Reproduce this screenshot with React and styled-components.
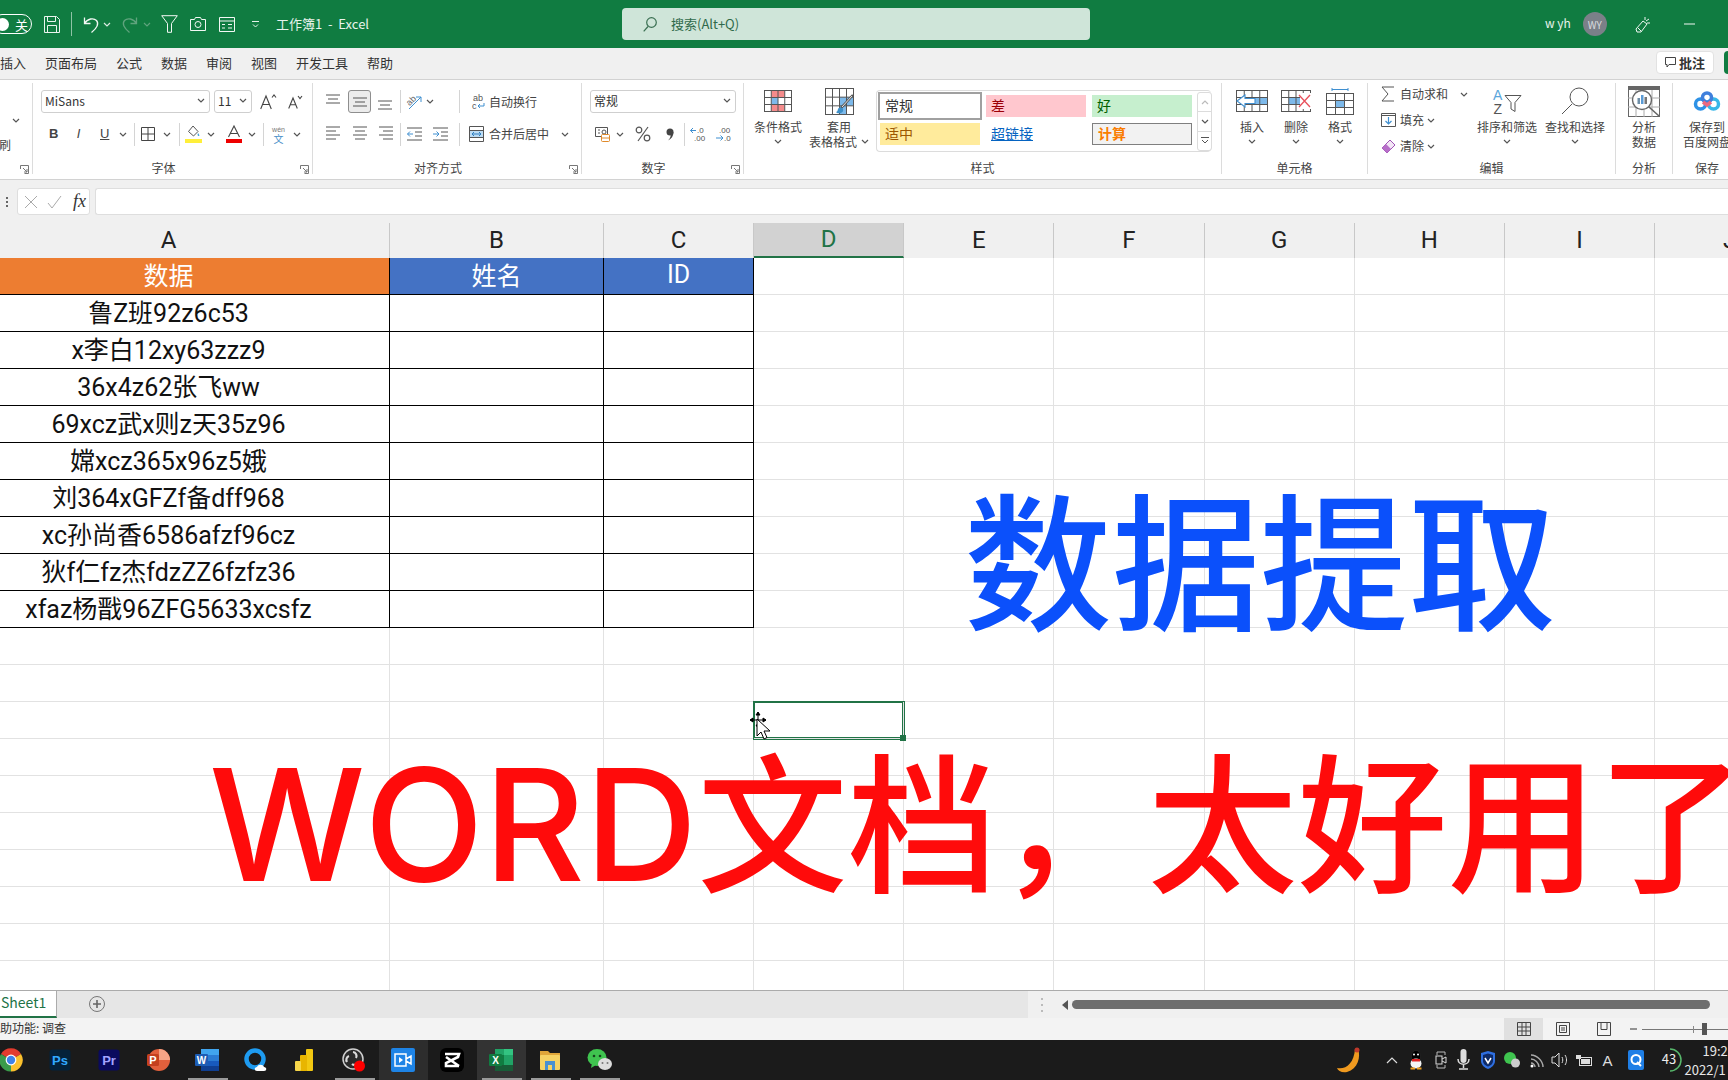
import styled, { createGlobalStyle } from "styled-components";

const UI_FONT = '"Noto Sans CJK SC", "Noto Sans", sans-serif';
const CELL_FONT = 'Roboto, "Noto Sans CJK SC", sans-serif';

const GlobalStyle = createGlobalStyle`
  html, body { margin: 0; padding: 0; width: 1728px; height: 1080px; overflow: hidden; background: #fff; }
  * { box-sizing: border-box; }
`;

const Page = styled.div`
  width: 1728px;
  height: 1080px;
  display: flex;
  flex-direction: column;
  overflow: hidden;
  font-family: ${UI_FONT};
  color: #444;
`;

// shared little parts, $ml is the distance from the previous item
const Ico = styled.svg`
  flex: none;
  display: block;
  overflow: visible;
  margin-left: ${(p) => p.$ml || 0}px;
  margin-top: ${(p) => p.$mt || 0}px;
`;

const Txt = styled.span`
  flex: none;
  margin-left: ${(p) => p.$ml || 0}px;
  margin-top: ${(p) => p.$mt || 0}px;
  font-size: ${(p) => p.$size || 12}px;
  line-height: 1;
  white-space: nowrap;
  color: ${(p) => p.$color || "#444"};
`;

const VLine = styled.div`
  flex: none;
  width: 1px;
  height: ${(p) => p.$h || 23}px;
  margin-left: ${(p) => p.$ml || 0}px;
  background: ${(p) => p.$color || "#d4d4d4"};
`;

function Chev({ ml, color = "#555", mt }) {
  return (
    <Ico $ml={ml} $mt={mt} width="8" height="5" viewBox="0 0 8 5">
      <path d="M1 1l3 3 3-3" fill="none" stroke={color} strokeWidth="1.2" />
    </Ico>
  );
}

// title bar
const TitleBar = styled.header`
  height: 48px;
  flex: none;
  display: flex;
  align-items: center;
  background: #107c41;
`;

const QuickAccess = styled.div`
  width: 622px;
  flex: none;
  display: flex;
  align-items: center;
`;

const Toggle = styled.div`
  flex: none;
  width: 40px;
  height: 20px;
  margin-left: -8px;
  padding-left: 3px;
  display: flex;
  align-items: center;
  gap: 6px;
  border: 1px solid #fff;
  border-radius: 10px;
  color: #fff;
  font-size: 13px;
`;

const ToggleKnob = styled.div`
  width: 13px;
  height: 13px;
  border-radius: 50%;
  background: #fff;
  flex: none;
`;

const SearchBox = styled.div`
  width: 468px;
  height: 32px;
  flex: none;
  display: flex;
  align-items: center;
  border-radius: 4px;
  background: #cfe5d9;
`;

const Avatar = styled.div`
  width: 24px;
  height: 24px;
  margin-left: 12px;
  border-radius: 50%;
  flex: none;
  display: flex;
  align-items: center;
  justify-content: center;
  background: #7b8088;
  color: #d8dade;
  font-size: 10px;
`;

// tab row
const TabRow = styled.nav`
  height: 32px;
  flex: none;
  padding-bottom: 3px;
  display: flex;
  align-items: center;
  gap: 19px;
  background: #f0f0f0;
  border-bottom: 1px solid #d2d2d2;
  font-size: 13px;
  color: #333;
  white-space: nowrap;
`;

const CommentBtn = styled.div`
  margin-left: auto;
  width: 58px;
  height: 23px;
  display: flex;
  align-items: center;
  justify-content: center;
  gap: 3px;
  background: #fff;
  border: 1px solid #e2e2e2;
  border-radius: 4px;
  font-weight: 700;
  font-size: 13px;
`;

const ShareBtn = styled.div`
  width: 4px;
  height: 23px;
  margin-left: -9px;
  border-radius: 4px 0 0 4px;
  background: #107c41;
`;

// ribbon
const Ribbon = styled.section`
  height: 100px;
  flex: none;
  display: flex;
  padding: 3px 0 5px;
  background: #fff;
  border-bottom: 1px solid #d2d2d2;
  overflow: hidden;
`;

const Group = styled.div`
  position: relative;
  flex: none;
  width: ${(p) => p.$w}px;
  height: 91px;
  display: flex;
  flex-direction: column;
  border-right: ${(p) => (p.$last ? "none" : "1px solid #dcdcdc")};
`;

const GroupBody = styled.div`
  height: 79px;
  flex: none;
  display: flex;
  flex-direction: ${(p) => (p.$col ? "column" : "row")};
  padding-top: ${(p) => (p.$col ? 7 : 0)}px;
`;

const Caption = styled.div`
  height: 12px;
  padding-right: ${(p) => (p.$launcher ? 18 : 0)}px;
  line-height: 12px;
  font-size: 12px;
  text-align: center;
  color: #444;
  white-space: nowrap;
`;

const Launcher = styled.svg`
  position: absolute;
  right: 3px;
  bottom: 0;
`;

const ToolRow = styled.div`
  display: flex;
  align-items: center;
  height: ${(p) => p.$h || 23}px;
  margin-top: ${(p) => p.$mt || 0}px;
`;

const Select = styled.div`
  flex: none;
  width: ${(p) => p.$w}px;
  height: 23px;
  margin-left: ${(p) => p.$ml || 0}px;
  padding: 0 4px 2px 3px;
  display: flex;
  align-items: center;
  justify-content: space-between;
  background: #fff;
  border: 1px solid #cfcfcf;
  border-radius: 3px;
  font-size: 12px;
  color: #333;
`;

const Letter = styled.span`
  flex: none;
  width: ${(p) => p.$w}px;
  margin-left: ${(p) => p.$ml || 0}px;
  text-align: center;
  line-height: 18px;
  font-size: 13px;
  font-family: "Liberation Sans", sans-serif;
  font-weight: ${(p) => (p.$bold ? 700 : 400)};
  font-style: ${(p) => (p.$italic ? "italic" : "normal")};
  text-decoration: ${(p) => (p.$under ? "underline" : "none")};
  color: #444;
`;

const ActiveTool = styled.div`
  flex: none;
  width: 23px;
  height: 23px;
  margin-left: ${(p) => p.$ml || 0}px;
  display: flex;
  align-items: center;
  justify-content: center;
  background: #ececec;
  border: 1px solid #8e8e8e;
  border-radius: 3px;
`;

const LargeBtn = styled.div`
  flex: none;
  width: ${(p) => p.$w}px;
  margin-left: ${(p) => p.$ml || 0}px;
  display: flex;
  flex-direction: column;
  align-items: center;
  font-size: 12px;
  color: #444;
`;

const LargeIcon = styled.div`
  height: 36px;
  flex: none;
  display: flex;
  align-items: center;
  justify-content: center;
`;

const BtnLine = styled.div`
  height: 15px;
  line-height: 15px;
  display: flex;
  align-items: center;
  gap: 4px;
  white-space: nowrap;
`;

const Gallery = styled.div`
  flex: none;
  width: 335px;
  height: 62px;
  margin: 7px 0 0 6px;
  padding: 1px 0 0 1px;
  display: flex;
  border: 1px solid #dcdcdc;
  border-right: none;
  border-radius: 4px;
`;

const StyleGrid = styled.div`
  display: grid;
  grid-template-columns: 108px 106px 100px;
  grid-template-rows: 28px 28px;
  align-items: center;
`;

const StyleCell = styled.div`
  width: ${(p) => p.$w || 100}px;
  height: ${(p) => p.$h || 22}px;
  margin-left: ${(p) => p.$ml || 0}px;
  padding: 0 0 3px 5px;
  display: flex;
  align-items: center;
  font-size: 14px;
  background: ${(p) => p.$bg || "transparent"};
  color: ${(p) => p.$color || "#333"};
  border: ${(p) => p.$border || "none"};
  font-weight: ${(p) => p.$weight || 400};
  text-decoration: ${(p) => (p.$link ? "underline" : "none")};
`;

const GalleryScroll = styled.div`
  flex: none;
  width: 15px;
  height: 59px;
  margin-left: 5px;
  display: flex;
  flex-direction: column;
  border: 1px solid #dcdcdc;
  border-radius: 3px;
`;

const ScrollCell = styled.div`
  flex: 1;
  display: flex;
  align-items: center;
  justify-content: center;
  border-bottom: ${(p) => (p.$last ? "none" : "1px solid #dcdcdc")};
`;

const EditList = styled.div`
  flex: none;
  width: 107px;
  padding-left: 13px;
  display: flex;
  flex-direction: column;
  gap: 4px;
`;

const EditRow = styled.div`
  height: 22px;
  display: flex;
  align-items: center;
  font-size: 12px;
`;

// formula bar
const FormulaBar = styled.div`
  height: 43px;
  flex: none;
  padding-top: 8px;
  display: flex;
  align-items: flex-start;
  background: #f0f0f0;
`;

const FnBox = styled.div`
  flex: none;
  width: 73px;
  height: 27px;
  margin-left: 9px;
  padding-left: 6px;
  display: flex;
  align-items: center;
  background: #fff;
  border: 1px solid #dedede;
  border-radius: 3px;
`;

const FnLabel = styled.span`
  margin-left: 11px;
  font-family: "Liberation Serif", serif;
  font-style: italic;
  font-size: 18px;
  color: #333;
`;

const FormulaInput = styled.div`
  flex: 1;
  height: 27px;
  margin-left: 5px;
  background: #fff;
  border: 1px solid #dedede;
  border-right: none;
  border-radius: 3px 0 0 3px;
`;

// sheet
const Sheet = styled.main`
  position: relative;
  flex: none;
  height: 767px;
  overflow: hidden;
  background: #fff;
`;

const SheetGrid = styled.div`
  width: max-content;
  margin-left: -52px;
  display: grid;
  grid-template-columns: 442px 214px repeat(8, 150.15px);
  grid-template-rows: 35px repeat(20, 37.03px);
`;

const ColHead = styled.div`
  display: flex;
  align-items: center;
  justify-content: center;
  padding-bottom: 1px;
  font-family: ${CELL_FONT};
  font-size: 24px;
  background: ${(p) => (p.$active ? "#d2d2d2" : "#f0f0f0")};
  color: ${(p) => (p.$active ? "#217346" : "#222")};
  border-right: 1px solid #c8c8c8;
  border-bottom: ${(p) => (p.$active ? "2px solid #217346" : "none")};
`;

const Cell = styled.div`
  display: flex;
  align-items: center;
  justify-content: center;
  padding-bottom: 4px;
  font-family: ${CELL_FONT};
  font-size: 25px;
  white-space: nowrap;
  color: ${(p) => (p.$fill ? "#fff" : "#111")};
  background: ${(p) => p.$fill || "#fff"};
  border-right: 1px solid ${(p) => (p.$table ? "#000" : "#e2e2e2")};
  border-bottom: 1px solid ${(p) => (p.$table ? "#000" : "#e2e2e2")};
  box-shadow: ${(p) => (p.$selected ? "inset 0 0 0 1px #217346, 0 0 0 1px #217346" : "none")};
  position: ${(p) => (p.$selected ? "relative" : "static")};
  z-index: ${(p) => (p.$selected ? 1 : "auto")};
`;

const FillHandle = styled.div`
  position: absolute;
  right: -3px;
  bottom: -3px;
  width: 6px;
  height: 6px;
  background: #217346;
`;

const BigText = styled.div`
  position: absolute;
  left: ${(p) => p.$x}px;
  top: ${(p) => p.$y}px;
  font-size: ${(p) => p.$size}px;
  line-height: 1;
  font-weight: 500;
  white-space: nowrap;
  color: ${(p) => p.$color};
`;

const BigLatin = styled.span`
  font-family: Inter, sans-serif;
  font-size: 156px;
`;

const CursorMark = styled.svg`
  position: absolute;
  left: 748px;
  top: 488px;
  z-index: 2;
`;

// bottom bars
const TabsBar = styled.div`
  height: 28px;
  flex: none;
  display: flex;
  align-items: flex-start;
  background: #e6e6e6;
  border-top: 1px solid #ababab;
`;

const SheetTab = styled.div`
  width: 57px;
  height: 27px;
  flex: none;
  padding: 0 0 3px 1px;
  display: flex;
  align-items: center;
  background: #fff;
  border-right: 1px solid #ababab;
  border-bottom: 2px solid #217346;
  color: #217346;
  font-size: 14px;
`;

const ScrollArea = styled.div`
  margin-left: auto;
  width: 700px;
  height: 27px;
  flex: none;
  display: flex;
  align-items: center;
  background: #f0f0f0;
`;

const ScrollThumb = styled.div`
  width: 638px;
  height: 9px;
  flex: none;
  margin-left: 4px;
  border-radius: 5px;
  background: #6e6e6e;
`;

const StatusBar = styled.div`
  height: 22px;
  flex: none;
  display: flex;
  align-items: center;
  background: #f3f3f3;
  font-size: 12px;
  color: #333;
`;

const StatusText = styled.span`
  flex: none;
  width: 1504px;
  line-height: 20px;
  height: 22px;
`;

const ViewBtn = styled.div`
  margin-left: ${(p) => p.$ml || 0}px;
  width: 39px;
  height: 22px;
  flex: none;
  display: flex;
  align-items: center;
  justify-content: center;
  background: ${(p) => (p.$active ? "#e0e0e0" : "transparent")};
`;

const ZoomLine = styled.div`
  margin-left: 5px;
  flex: 1;
  height: 1px;
  display: flex;
  align-items: center;
  background: #777;
`;

const ZoomTick = styled.div`
  flex: none;
  width: ${(p) => p.$w}px;
  height: ${(p) => p.$h}px;
  margin-left: ${(p) => p.$ml}px;
  background: ${(p) => p.$color};
`;

const Taskbar = styled.footer`
  height: 40px;
  flex: none;
  display: flex;
  align-items: center;
  background: #1b1b1b;
  overflow: hidden;
`;

const TaskApps = styled.div`
  flex: none;
  width: 1350px;
  height: 40px;
  margin-left: -13.5px;
  display: flex;
`;

const TaskSlot = styled.div`
  position: relative;
  flex: none;
  width: ${(p) => p.$w || 49}px;
  height: 40px;
  display: flex;
  align-items: center;
  justify-content: center;
  background: ${(p) => p.$bg || "transparent"};

  &::after {
    content: "";
    display: ${(p) => (p.$running ? "block" : "none")};
    position: absolute;
    bottom: 0;
    left: 5px;
    right: 4px;
    height: 2px;
    background: #9a9a9a;
  }
`;

const Clock = styled.div`
  margin-left: 5px;
  flex: none;
  width: 60px;
  display: flex;
  flex-direction: column;
  gap: 4px;
  color: #e8e8e8;
  font-size: 13px;
  line-height: 15px;
  white-space: nowrap;
`;

const ClockTime = styled.div`
  padding-left: 18px;
`;

// ribbon icons
const ALIGN_LINES = {
  top: ["M0 1h14", "M2 5h10", "M0 9h14"],
  middle: ["M0 4h14", "M2 8h10", "M0 12h14"],
  bottom: ["M0 7h14", "M2 11h10", "M0 15h14"],
  left: ["M0 1h14", "M0 5h10", "M0 9h14", "M0 13h10"],
  center: ["M0 1h14", "M2 5h10", "M0 9h14", "M2 13h10"],
  right: ["M0 1h14", "M4 5h10", "M0 9h14", "M4 13h10"],
};

function AlignIcon({ kind, ml }) {
  return (
    <Ico $ml={ml} width="14" height="16" viewBox="0 0 14 16">
      {ALIGN_LINES[kind].map((d) => (
        <path key={d} d={d} stroke="#555" strokeWidth="1" fill="none" />
      ))}
    </Ico>
  );
}

// small table picture for the big ribbon buttons
function TableIcon({ w, h, cols, rows, cells = [], children, extraTop = 0 }) {
  const lines = [];
  for (let i = 0; i <= cols; i++) {
    const x = 0.5 + (i * (w - 1)) / cols;
    lines.push(<path key={"c" + i} d={`M${x} ${extraTop + 0.5}V${h - 0.5}`} />);
  }
  for (let j = 0; j <= rows; j++) {
    const y = extraTop + 0.5 + (j * (h - extraTop - 1)) / rows;
    lines.push(<path key={"r" + j} d={`M0 ${y}H${w}`} />);
  }
  const cw = (w - 1) / cols;
  const ch = (h - extraTop - 1) / rows;
  return (
    <Ico width={w} height={h} viewBox={`0 0 ${w} ${h}`}>
      {cells.map(([c, r, color, span = 1]) => (
        <rect key={`${c}${r}`} x={0.5 + c * cw} y={extraTop + 0.5 + r * ch} width={cw * span} height={ch} fill={color} />
      ))}
      <g stroke="#555" strokeWidth="1" fill="none">{lines}</g>
      {children}
    </Ico>
  );
}

function BaiduIcon() {
  return (
    <Ico width="28" height="20" viewBox="0 0 28 20">
      <circle cx="7.5" cy="13" r="5" fill="none" stroke="#2e92e6" strokeWidth="3.5" />
      <circle cx="20.5" cy="13" r="5" fill="none" stroke="#38b7e8" strokeWidth="3.5" />
      <circle cx="14" cy="6.5" r="4.5" fill="none" stroke="#3f7fdc" strokeWidth="3.5" />
      <path d="M10 11l4 3 4-3" fill="none" stroke="#ec6a80" strokeWidth="3.5" />
    </Ico>
  );
}

function MoreAppsIcon() {
  return (
    <Ico width="32" height="31" viewBox="0 0 32 31">
      <rect x="0.5" y="0.5" width="31" height="30" fill="#fff" stroke="#666" />
      <rect x="0" y="0" width="32" height="4" fill="#666" />
      <g stroke="#aaa" fill="none">
        <path d="M0 12h32M0 21h32M8 4v27M16 4v27M24 4v27" />
      </g>
      <circle cx="14" cy="14" r="9.5" fill="#fff" stroke="#666" strokeWidth="1.4" />
      <path d="M21 21l10 9" stroke="#666" strokeWidth="1.6" />
      <rect x="9.5" y="12" width="2.5" height="6" fill="#6f8fa8" />
      <rect x="13" y="9" width="2.5" height="9" fill="#5b9bd5" />
      <rect x="16.5" y="11" width="2.5" height="7" fill="#777" />
    </Ico>
  );
}

// taskbar icons
function TaskIcon({ children, w = 24, h = 24 }) {
  return (
    <Ico width={w} height={h} viewBox={`0 0 ${w} ${h}`}>
      {children}
    </Ico>
  );
}

const svgFont = '"Liberation Sans", sans-serif';

const APPS = [
  {
    icon: (
      <TaskIcon>
        <path d="M12 12L2 6a11.5 11.5 0 0 1 20 0z" fill="#e33b2e" />
        <path d="M12 12l10-6a11.5 11.5 0 0 1-10 17.5z" fill="#fbc02d" />
        <path d="M12 12v11.5A11.5 11.5 0 0 1 2 6z" fill="#3a9b4a" />
        <circle cx="12" cy="12" r="5.4" fill="#fff" />
        <circle cx="12" cy="12" r="4.2" fill="#3f82e8" />
      </TaskIcon>
    ),
  },
  {
    icon: (
      <TaskIcon>
        <rect x="1.5" y="1.5" width="21" height="21" rx="3" fill="#04223a" />
        <text x="12" y="17" textAnchor="middle" fontFamily={svgFont} fontSize="13" fontWeight="700" fill="#31a8ff">Ps</text>
      </TaskIcon>
    ),
  },
  {
    icon: (
      <TaskIcon>
        <rect x="1.5" y="1.5" width="21" height="21" rx="3" fill="#0a0a5e" />
        <text x="12" y="17" textAnchor="middle" fontFamily={svgFont} fontSize="13" fontWeight="700" fill="#a3a3ff">Pr</text>
      </TaskIcon>
    ),
  },
  {
    icon: (
      <TaskIcon>
        <circle cx="13" cy="12" r="11" fill="#e2603c" />
        <path d="M13 12V1a11 11 0 0 1 11 11z" fill="#f5a486" />
        <rect x="1" y="6" width="12" height="12" rx="1.5" fill="#c4401f" />
        <text x="7" y="16" textAnchor="middle" fontFamily={svgFont} fontSize="11" fontWeight="700" fill="#fff">P</text>
      </TaskIcon>
    ),
  },
  {
    running: true,
    icon: (
      <TaskIcon>
        <rect x="6" y="1" width="18" height="6" fill="#41a5ee" />
        <rect x="6" y="7" width="18" height="6" fill="#2b7cd3" />
        <rect x="6" y="13" width="18" height="5" fill="#185abd" />
        <rect x="6" y="18" width="18" height="5" fill="#103f91" />
        <rect x="0" y="6" width="13" height="12" rx="1" fill="#1e5db4" />
        <text x="6.5" y="16" textAnchor="middle" fontFamily={svgFont} fontSize="10" fontWeight="700" fill="#fff">W</text>
      </TaskIcon>
    ),
  },
  {
    icon: (
      <TaskIcon>
        <circle cx="11" cy="11" r="8.5" fill="none" stroke="#1e9bf0" strokeWidth="4.5" />
        <path d="M13 23c-3 0-3-4 0-4 1-3 6-3 7 0 3 0 3 4 0 4z" fill="#fff" />
      </TaskIcon>
    ),
  },
  {
    icon: (
      <TaskIcon>
        <rect x="13" y="1" width="7" height="22" rx="1" fill="#f2c811" />
        <rect x="7" y="7" width="7" height="16" rx="1" fill="#e8b500" />
        <rect x="2" y="13" width="6" height="10" rx="1" fill="#f6d64a" />
      </TaskIcon>
    ),
  },
  {
    running: true,
    icon: (
      <TaskIcon>
        <circle cx="11" cy="11" r="10" fill="#2b2b2b" stroke="#cfcfcf" strokeWidth="1.5" />
        <path d="M11 4a4 4 0 0 1 3 6M5 14a4 4 0 0 1 2-6M16 15a4 4 0 0 1-6 1" fill="none" stroke="#dcdcdc" strokeWidth="2.2" />
        <circle cx="17.5" cy="18" r="5.5" fill="#f00" />
      </TaskIcon>
    ),
  },
  {
    bg: "#2d2d2d",
    icon: (
      <TaskIcon>
        <rect width="24" height="24" rx="2" fill="#1e84e6" />
        <path d="M4 6h11v12H4zM15 11l5-3v8l-5-3" fill="none" stroke="#fff" strokeWidth="1.5" />
        <path d="M8 9v6l4-3z" fill="#fff" />
      </TaskIcon>
    ),
  },
  {
    icon: (
      <TaskIcon>
        <rect width="24" height="24" rx="6" fill="#000" />
        <path d="M5 6l14 0-1 3-12 6 0 3h13M19 18L6 9" fill="none" stroke="#fff" strokeWidth="2.6" />
      </TaskIcon>
    ),
  },
  {
    bg: "#333",
    running: true,
    icon: (
      <TaskIcon>
        <rect x="6" y="1" width="9" height="6" fill="#21a366" />
        <rect x="15" y="1" width="9" height="6" fill="#33c481" />
        <rect x="6" y="7" width="9" height="10" fill="#107c41" />
        <rect x="15" y="7" width="9" height="10" fill="#21a366" />
        <rect x="6" y="17" width="18" height="6" fill="#185c37" />
        <rect x="0" y="6" width="13" height="12" rx="1" fill="#107c41" />
        <text x="6.5" y="16" textAnchor="middle" fontFamily={svgFont} fontSize="10" fontWeight="700" fill="#fff">X</text>
      </TaskIcon>
    ),
  },
  {
    running: true,
    icon: (
      <TaskIcon w={22}>
        <path d="M1 3h8l2 2h10v6H1z" fill="#e0a63a" />
        <rect x="1" y="7" width="20" height="15" rx="1" fill="#f6d264" />
        <rect x="6" y="13" width="10" height="9" fill="#4a90d0" />
        <rect x="9" y="17" width="4" height="5" fill="#f6d264" />
      </TaskIcon>
    ),
  },
  {
    running: true,
    icon: (
      <TaskIcon w={25}>
        <ellipse cx="10" cy="9.5" rx="9.5" ry="8.5" fill="#3fc44f" />
        <path d="M5 15l-1 5 5-3z" fill="#3fc44f" />
        <circle cx="7" cy="8" r="1.3" fill="#16451c" />
        <circle cx="13" cy="8" r="1.3" fill="#16451c" />
        <ellipse cx="18" cy="16" rx="7" ry="6" fill="#ddd" />
        <circle cx="15.5" cy="15" r="1" fill="#777" />
        <circle cx="20.5" cy="15" r="1" fill="#777" />
      </TaskIcon>
    ),
  },
];

const HEAD_COLS = ["A", "B", "C", "D", "E", "F", "G", "H", "I", "J"];
const NAMES = [
  "鲁Z班92z6c53",
  "x李白12xy63zzz9",
  "36x4z62张飞ww",
  "69xcz武x则z天35z96",
  "嫦xcz365x96z5娥",
  "刘364xGFZf备dff968",
  "xc孙尚香6586afzf96cz",
  "狄f仁fz杰fdzZZ6fzfz36",
  "xfaz杨戬96ZFG5633xcsfz",
];

function SheetCells() {
  const cells = [];
  HEAD_COLS.forEach((c) => (
    cells.push(<ColHead key={c} $active={c === "D"}>{c}</ColHead>)
  ));
  for (let row = 0; row < 20; row++) {
    HEAD_COLS.forEach((c, i) => {
      const inTable = row < 10 && i < 3;
      let text = "";
      let fill;
      if (row === 0 && i === 0) { text = "数据"; fill = "#ed7d31"; }
      if (row === 0 && i === 1) { text = "姓名"; fill = "#4472c4"; }
      if (row === 0 && i === 2) { text = "ID"; fill = "#4472c4"; }
      if (row > 0 && row < 10 && i === 0) text = NAMES[row - 1];
      const selected = row === 12 && c === "D";
      cells.push(
        <Cell key={c + row} $table={inTable} $fill={fill} $selected={selected}>
          {text}
          {selected && <FillHandle />}
        </Cell>
      );
    });
  }
  return cells;
}

const launcher = (
  <Launcher width="9" height="9" viewBox="0 0 9 9">
    <path d="M0.5 4V0.5H8.5V8.5H4.5M3 3l4 4M7 4v3H4" fill="none" stroke="#777" strokeWidth="1" />
  </Launcher>
);

export default function App() {
  return (
    <Page>
      <GlobalStyle />
      <TitleBar>
        <QuickAccess>
          <Toggle>
            <ToggleKnob />
            关
          </Toggle>
          <Ico $ml={12} width="16" height="17" viewBox="0 0 16 17">
            <path d="M0.5 0.5h12l3 3v13H0.5zM3.5 0.5v5h8v-5M3.5 16.5v-7h9v7" fill="none" stroke="#eaf4ee" />
          </Ico>
          <VLine $ml={11} $h={24} $color="#8fc3a5" />
          <Ico $ml={11} width="16" height="17" viewBox="0 0 16 17">
            <path d="M1.5 1.5v6h6M1.5 7.5c3-5 9-6 12-3 2.5 3 1 7-5 12" fill="none" stroke="#f2f8f4" strokeWidth="1.3" />
          </Ico>
          <Chev ml={4} color="#dcebe2" />
          <Ico $ml={12} width="15" height="17" viewBox="0 0 15 17">
            <path d="M13.5 1.5v6h-6M13.5 7.5c-3-5-9-6-12-3-2.5 3-1 7 5 12" fill="none" stroke="#5fa37d" strokeWidth="1.3" />
          </Ico>
          <Chev ml={5} color="#5fa37d" />
          <Ico $ml={10} width="17" height="18" viewBox="0 0 17 18">
            <path d="M0.7 0.7h15.6L10.5 8.5v8.8h-4V8.5z" fill="none" stroke="#f2f8f4" />
          </Ico>
          <Ico $ml={12} width="16" height="14" viewBox="0 0 16 14">
            <path d="M0.5 2.5h4l1-2h5l1 2h4v11H0.5z" fill="none" stroke="#f2f8f4" />
            <circle cx="8" cy="7.5" r="3" fill="none" stroke="#f2f8f4" />
          </Ico>
          <Ico $ml={13} width="16" height="15" viewBox="0 0 16 15">
            <path d="M0.5 0.5h15v14H0.5zM0.5 4h15M3 7.5h3M3 11h3M9 7.5h4M9 11h4" fill="none" stroke="#f2f8f4" />
          </Ico>
          <Ico $ml={17} width="7" height="7" viewBox="0 0 7 7">
            <path d="M0 0.5h7M1 3.5l2.5 2.5L6 3.5" fill="none" stroke="#e6f2ea" />
          </Ico>
          <Txt $ml={17} $mt={-2} $size={13} $color="#e8f3ec">工作簿1&nbsp; - &nbsp;Excel</Txt>
        </QuickAccess>
        <SearchBox>
          <Ico $ml={21} width="14" height="15" viewBox="0 0 14 15">
            <circle cx="8.5" cy="5.5" r="4.8" fill="none" stroke="#3a6f52" strokeWidth="1.2" />
            <path d="M5 9.5L0.7 14.3" stroke="#3a6f52" strokeWidth="1.2" />
          </Ico>
          <Txt $ml={14} $mt={-2} $size={13} $color="#2f6a4b">搜索(Alt+Q)</Txt>
        </SearchBox>
        <Txt $ml={455} $mt={-3} $size={12} $color="#e8f3ec">w yh</Txt>
        <Avatar>WY</Avatar>
        <Ico $ml={28} width="16" height="17" viewBox="0 0 16 17">
          <path d="M1 13l7-8 4 3-6 8H2zM3 12l3 3M10 1v3M14 3l-3 2M15 7h-3" fill="none" stroke="#f2f8f4" />
        </Ico>
        <Ico $ml={33} width="11" height="2" viewBox="0 0 11 2">
          <path d="M0 1h11" stroke="#f2f8f4" />
        </Ico>
      </TitleBar>

      <TabRow>
        <span>插入</span>
        <span>页面布局</span>
        <span>公式</span>
        <span>数据</span>
        <span>审阅</span>
        <span>视图</span>
        <span>开发工具</span>
        <span>帮助</span>
        <CommentBtn>
          <Ico width="11" height="11" viewBox="0 0 11 11">
            <path d="M0.5 0.5h10v7H4l-2 2.5v-2.5H0.5z" fill="none" stroke="#444" />
          </Ico>
          批注
        </CommentBtn>
        <ShareBtn />
      </TabRow>

      <Ribbon>
        <Group $w={33}>
          <GroupBody $col>
            <Chev ml={12} mt={28} />
            <Txt $ml={-1} $mt={16}>刷</Txt>
          </GroupBody>
          {launcher}
        </Group>

        <Group $w={280}>
          <GroupBody $col>
            <ToolRow>
              <Select $ml={8} $w={169}>MiSans<Chev /></Select>
              <Select $ml={4} $w={38}>11<Chev /></Select>
              <Ico $ml={8} width="17" height="16" viewBox="0 0 17 16">
                <path d="M0.7 15L6 2l5.3 13M2.7 10.5h6.6M12 3.5l2-2.500 2 2.500" fill="none" stroke="#444" strokeWidth="1.1" />
              </Ico>
              <Ico $ml={11} width="14" height="14" viewBox="0 0 14 14">
                <path d="M0.7 13.500L5 3l4.300 10.500M2.300 9.800h5.400M10 1l2 2.500L14 1" fill="none" stroke="#444" strokeWidth="1.1" />
              </Ico>
            </ToolRow>
            <ToolRow $mt={9} $h={24}>
              <Letter $ml={16} $w={8} $bold>B</Letter>
              <Letter $ml={19} $w={5} $italic>I</Letter>
              <Letter $ml={19} $w={9} $under>U</Letter>
              <Chev ml={10} />
              <VLine $ml={7} />
              <Ico $ml={6} width="14" height="14" viewBox="0 0 14 14">
                <path d="M0.5 0.5h13v13H0.5zM7 0.5v13M0.5 7h13" fill="none" stroke="#444" />
              </Ico>
              <Chev ml={8} />
              <VLine $ml={8} />
              <Ico $ml={5} width="17" height="18" viewBox="0 0 17 18">
                <path d="M8 1l5 5.5-4.500 4.500-5-4.500z" fill="none" stroke="#555" />
                <path d="M13 8c1 1.500 2 2.500 1 3-1 .5-2-1-1-3z" fill="#3aa0d8" />
                <rect y="14" width="17" height="4" fill="#ffef3a" />
              </Ico>
              <Chev ml={5} />
              <Ico $ml={11} width="16" height="18" viewBox="0 0 16 18">
                <path d="M2.500 12L8 1l5.500 11M4.500 8.500h7" fill="none" stroke="#444" strokeWidth="1.1" />
                <rect y="14" width="16" height="4" fill="#e00" />
              </Ico>
              <Chev ml={6} />
              <VLine $ml={7} />
              <Ico $ml={7} width="15" height="19" viewBox="0 0 15 19">
                <text x="7.500" y="7" textAnchor="middle" fontFamily={svgFont} fontSize="7" fill="#777">wén</text>
                <text x="7.500" y="18" textAnchor="middle" fontFamily={UI_FONT} fontSize="10" fill="#4a90c8">文</text>
              </Ico>
              <Chev ml={7} />
            </ToolRow>
          </GroupBody>
          <Caption $launcher>字体</Caption>
          {launcher}
        </Group>

        <Group $w={269}>
          <GroupBody $col>
            <ToolRow>
              <AlignIcon kind="top" ml={13} />
              <ActiveTool $ml={8}><AlignIcon kind="middle" /></ActiveTool>
              <AlignIcon kind="bottom" ml={7} />
              <VLine $ml={8} />
              <Ico $ml={5} width="16" height="16" viewBox="0 0 16 16">
                <text x="1" y="10" fontFamily={svgFont} fontSize="9" fill="#666" transform="rotate(-45 5 8)">ab</text>
                <path d="M3 15L15 3M10 3h5v5" fill="none" stroke="#3f8fd0" />
              </Ico>
              <Chev ml={4} />
              <VLine $ml={25} />
              <Ico $ml={12} width="13" height="17" viewBox="0 0 13 17">
                <text x="1" y="8" fontFamily={svgFont} fontSize="9" fill="#555">ab</text>
                <text x="0" y="16" fontFamily={svgFont} fontSize="9" fill="#555">c</text>
                <path d="M12 10v3H6M8 11l-2 2 2 2" fill="none" stroke="#3f8fd0" />
              </Ico>
              <Txt $ml={4}>自动换行</Txt>
            </ToolRow>
            <ToolRow $mt={9} $h={24}>
              <AlignIcon kind="left" ml={13} />
              <AlignIcon kind="center" ml={13} />
              <AlignIcon kind="right" ml={12} />
              <VLine $ml={7} />
              <Ico $ml={6} width="15" height="14" viewBox="0 0 15 14">
                <path d="M0 1h15M8 5h7M8 9h7M0 13h15" stroke="#555" fill="none" />
                <path d="M6 7H0.500M3 4.500L.5 7 3 9.500" stroke="#3f8fd0" fill="none" />
              </Ico>
              <Ico $ml={11} width="15" height="14" viewBox="0 0 15 14">
                <path d="M0 1h15M8 5h7M8 9h7M0 13h15" stroke="#555" fill="none" />
                <path d="M0 7h6M3.500 4.500L6 7 3.500 9.500" stroke="#3f8fd0" fill="none" />
              </Ico>
              <VLine $ml={11} />
              <Ico $ml={9} width="15" height="16" viewBox="0 0 15 16">
                <path d="M0.500 0.500h14v15H0.500zM0.500 4.500h14M0.500 11.500h14" fill="none" stroke="#555" />
                <rect x="1" y="5" width="13" height="6" fill="#bcdcf4" />
                <path d="M3 8h9M5 6L3 8l2 2M10 6l2 2-2 2" fill="none" stroke="#2f7fc0" />
              </Ico>
              <Txt $ml={5}>合并后居中</Txt>
              <Chev ml={12} />
            </ToolRow>
          </GroupBody>
          <Caption $launcher>对齐方式</Caption>
          {launcher}
        </Group>

        <Group $w={162}>
          <GroupBody $col>
            <ToolRow>
              <Select $ml={8} $w={146}>常规<Chev /></Select>
            </ToolRow>
            <ToolRow $mt={9} $h={24}>
              <Ico $ml={13} width="15" height="16" viewBox="0 0 15 16">
                <path d="M0.500 1.500h12v9H0.500zM3 4h2M3 7h2" fill="none" stroke="#555" />
                <circle cx="9" cy="6" r="2" fill="none" stroke="#555" />
                <rect x="6.500" y="8.500" width="8" height="7" rx="1" fill="#fff" stroke="#e08a2a" />
                <path d="M7 12h7" stroke="#e08a2a" />
              </Ico>
              <Chev ml={6} />
              <Ico $ml={11} width="16" height="16" viewBox="0 0 16 16">
                <path d="M13 1L3 15" stroke="#555" strokeWidth="1.200" />
                <circle cx="4" cy="4" r="2.800" fill="none" stroke="#555" strokeWidth="1.200" />
                <circle cx="12" cy="12" r="2.800" fill="none" stroke="#555" strokeWidth="1.200" />
              </Ico>
              <Ico $ml={15} width="8" height="13" viewBox="0 0 8 13">
                <circle cx="4" cy="4" r="3.500" fill="#444" />
                <path d="M7.500 4c0 4-2 7-5.500 8.500C4.500 10 5 8 4.500 6z" fill="#444" />
              </Ico>
              <VLine $ml={10} />
              <Ico $ml={5} width="15" height="16" viewBox="0 0 15 16">
                <text x="7" y="7" fontFamily={svgFont} fontSize="8" fill="#555">.0</text>
                <text x="4" y="15" fontFamily={svgFont} fontSize="8" fill="#555">.00</text>
                <path d="M6 4.500H0.500M3 2L.5 4.500 3 7" fill="none" stroke="#3f8fd0" />
              </Ico>
              <Ico $ml={11} width="15" height="16" viewBox="0 0 15 16">
                <text x="3" y="7" fontFamily={svgFont} fontSize="8" fill="#555">.00</text>
                <text x="8" y="15" fontFamily={svgFont} fontSize="8" fill="#555">.0</text>
                <path d="M0 12h7M4.500 9.500L7 12l-2.500 2.500" fill="none" stroke="#3f8fd0" />
              </Ico>
            </ToolRow>
          </GroupBody>
          <Caption $launcher>数字</Caption>
          {launcher}
        </Group>

        <Group $w={478}>
          <GroupBody>
            <LargeBtn $ml={4} $w={60}>
              <LargeIcon>
                <TableIcon w={28} h={22} cols={4} rows={3} cells={[[1, 0, "#f48b8b", 2], [1, 1, "#7db9ea"], [1, 2, "#f48b8b", 2]]} />
              </LargeIcon>
              <BtnLine>条件格式</BtnLine>
              <BtnLine><Chev /></BtnLine>
            </LargeBtn>
            <LargeBtn $w={62}>
              <LargeIcon>
                <TableIcon w={29} h={27} cols={4} rows={3} cells={[[2, 1, "#7db9ea", 2], [2, 2, "#7db9ea", 1]]}>
                  <path d="M28 7L16 20" stroke="#555" strokeWidth="2.500" />
                  <path d="M27 8L17 19" stroke="#e8e8e8" strokeWidth="1" />
                  <path d="M12 25c4 1 7-1 6-4-1-2-4-2-5 0-.3 2-1 3-2 3z" fill="#3d8fc8" />
                </TableIcon>
              </LargeIcon>
              <BtnLine>套用</BtnLine>
              <BtnLine>表格格式<Chev /></BtnLine>
            </LargeBtn>
            <Gallery>
              <StyleGrid>
                <StyleCell $w={104} $h={28} $border="2px solid #a0a0a0">常规</StyleCell>
                <StyleCell $bg="#ffc7ce" $color="#9c0006">差</StyleCell>
                <StyleCell $bg="#c6efce" $color="#006100">好</StyleCell>
                <StyleCell $ml={2} $bg="#ffeb9c" $color="#9c5700">适中</StyleCell>
                <StyleCell $color="#0563c1" $link>超链接</StyleCell>
                <StyleCell $bg="#f2f2f2" $color="#fa7d00" $weight={700} $border="1px solid #7f7f7f">计算</StyleCell>
              </StyleGrid>
              <GalleryScroll>
                <ScrollCell><Ico width="8" height="5" viewBox="0 0 8 5"><path d="M1 4l3-3 3 3" fill="none" stroke="#bbb" strokeWidth="1.200" /></Ico></ScrollCell>
                <ScrollCell><Chev /></ScrollCell>
                <ScrollCell $last>
                  <Ico width="8" height="7" viewBox="0 0 8 7"><path d="M0 .5h8M1 3l3 3 3-3" fill="none" stroke="#555" /></Ico>
                </ScrollCell>
              </GalleryScroll>
            </Gallery>
          </GroupBody>
          <Caption>样式</Caption>
        </Group>

        <Group $w={146}>
          <GroupBody>
            <LargeBtn $ml={8} $w={44}>
              <LargeIcon>
                <TableIcon w={32} h={22} cols={4} rows={3} cells={[[1, 1, "#7db9ea", 3]]}>
                  <path d="M9 5L1 11l8 6v-3.500h10v-5H9z" fill="#fff" stroke="#3f8fd0" strokeWidth="1.100" />
                </TableIcon>
              </LargeIcon>
              <BtnLine>插入</BtnLine>
              <BtnLine><Chev /></BtnLine>
            </LargeBtn>
            <LargeBtn $w={44}>
              <LargeIcon>
                <TableIcon w={30} h={22} cols={4} rows={3} cells={[[1, 1, "#7db9ea", 2]]}>
                  <rect x="19" y="3" width="11" height="16" fill="#fff" />
                  <path d="M18 5l11 12M29 5L18 17" stroke="#e8505b" strokeWidth="1.300" />
                </TableIcon>
              </LargeIcon>
              <BtnLine>删除</BtnLine>
              <BtnLine><Chev /></BtnLine>
            </LargeBtn>
            <LargeBtn $w={44}>
              <LargeIcon>
                <TableIcon w={28} h={27} cols={3} rows={3} extraTop={5} cells={[[1, 1, "#7db9ea"]]}>
                  <path d="M6 1.500h16M6 0v3M22 0v3" stroke="#3f8fd0" />
                </TableIcon>
              </LargeIcon>
              <BtnLine>格式</BtnLine>
              <BtnLine><Chev /></BtnLine>
            </LargeBtn>
          </GroupBody>
          <Caption>单元格</Caption>
        </Group>

        <Group $w={248}>
          <GroupBody>
            <EditList>
              <EditRow>
                <Ico width="14" height="16" viewBox="0 0 14 16">
                  <path d="M13 1H1l6 7-6 7h12" fill="none" stroke="#555" />
                </Ico>
                <Txt $ml={5}>自动求和</Txt>
                <Chev ml={12} />
              </EditRow>
              <EditRow>
                <Ico width="15" height="14" viewBox="0 0 15 14">
                  <path d="M0.500 0.500h14v13H0.500zM0.500 2.500h14" fill="none" stroke="#555" />
                  <path d="M7.500 4v7M4.500 8l3 3 3-3" fill="none" stroke="#3f8fd0" strokeWidth="1.200" />
                </Ico>
                <Txt $ml={4}>填充</Txt>
                <Chev ml={3} />
              </EditRow>
              <EditRow>
                <Ico width="15" height="15" viewBox="0 0 15 15">
                  <path d="M9 1l5 5-8 8-5-5z" fill="#f3e6f6" stroke="#a055b5" />
                  <path d="M1 9l4-4 5 5-4 4z" fill="#b76ec9" />
                </Ico>
                <Txt $ml={4}>清除</Txt>
                <Chev ml={3} />
              </EditRow>
            </EditList>
            <LargeBtn $w={64}>
              <LargeIcon>
                <Ico width="29" height="25" viewBox="0 0 29 25">
                  <text x="0" y="11" fontFamily={svgFont} fontSize="14" fill="#5aa6dc">A</text>
                  <text x="0.500" y="25" fontFamily={svgFont} fontSize="14" fill="#555">Z</text>
                  <path d="M12 6.500h16l-6 7v9l-4-2.500v-6.500z" fill="none" stroke="#555" />
                </Ico>
              </LargeIcon>
              <BtnLine>排序和筛选</BtnLine>
              <BtnLine><Chev /></BtnLine>
            </LargeBtn>
            <LargeBtn $ml={2} $w={68}>
              <LargeIcon>
                <Ico width="28" height="28" viewBox="0 0 28 28">
                  <circle cx="18" cy="10" r="9" fill="none" stroke="#555" />
                  <path d="M11 17L1 27" stroke="#555" />
                </Ico>
              </LargeIcon>
              <BtnLine>查找和选择</BtnLine>
              <BtnLine><Chev /></BtnLine>
            </LargeBtn>
          </GroupBody>
          <Caption>编辑</Caption>
        </Group>

        <Group $w={57}>
          <GroupBody>
            <LargeBtn $w={56}>
              <LargeIcon><MoreAppsIcon /></LargeIcon>
              <BtnLine>分析</BtnLine>
              <BtnLine>数据</BtnLine>
            </LargeBtn>
          </GroupBody>
          <Caption>分析</Caption>
        </Group>

        <Group $w={68} $last>
          <GroupBody>
            <LargeBtn $w={68}>
              <LargeIcon><BaiduIcon /></LargeIcon>
              <BtnLine>保存到</BtnLine>
              <BtnLine>百度网盘</BtnLine>
            </LargeBtn>
          </GroupBody>
          <Caption>保存</Caption>
        </Group>
      </Ribbon>

      <FormulaBar>
        <Ico $ml={6} $mt={9} width="2" height="10" viewBox="0 0 2 10">
          <path d="M1 0v2M1 4v2M1 8v2" stroke="#666" strokeWidth="2" />
        </Ico>
        <FnBox>
          <Ico width="14" height="14" viewBox="0 0 14 14">
            <path d="M1 1l12 12M13 1L1 13" stroke="#aaa" />
          </Ico>
          <Ico $ml={9} width="15" height="14" viewBox="0 0 15 14">
            <path d="M1 8l4 5L14 1" fill="none" stroke="#aaa" />
          </Ico>
          <FnLabel>fx</FnLabel>
        </FnBox>
        <FormulaInput />
      </FormulaBar>

      <Sheet>
        <SheetGrid>
          <SheetCells />
        </SheetGrid>
        <BigText $x={964} $y={258} $size={148} $color="#0b50fb">数据提取</BigText>
        <BigText $x={209} $y={518} $size={150} $color="#ff0b0b"><BigLatin>WORD</BigLatin>文档，太好用了</BigText>
        <CursorMark width="22" height="30" viewBox="0 0 22 30">
          <path d="M10 1v16M2 9h16M10 1L8 4h4zM10 17l-2-3h4zM2 9l3-2v4zM18 9l-3-2v4z" fill="#000" stroke="#000" />
          <path d="M9 8v17l4-4 3 7 3-1.500-3-6.500h6z" fill="#fff" stroke="#000" />
        </CursorMark>
      </Sheet>

      <TabsBar>
        <SheetTab>Sheet1</SheetTab>
        <Ico $ml={31} $mt={4} width="18" height="18" viewBox="0 0 18 18">
          <circle cx="9" cy="9" r="7.500" fill="none" stroke="#777" />
          <path d="M9 5v8M5 9h8" stroke="#666" strokeWidth="1.600" />
        </Ico>
        <ScrollArea>
          <Ico $ml={13} width="2" height="14" viewBox="0 0 2 14">
            <path d="M1 0v2M1 6v2M1 12v2" stroke="#bbb" strokeWidth="2" />
          </Ico>
          <Ico $ml={19} width="6" height="10" viewBox="0 0 6 10">
            <path d="M6 0v10L0 5z" fill="#555" />
          </Ico>
          <ScrollThumb />
        </ScrollArea>
      </TabsBar>

      <StatusBar>
        <StatusText>助功能: 调查</StatusText>
        <ViewBtn $active>
          <Ico width="14" height="14" viewBox="0 0 14 14">
            <path d="M0.500 0.500h13v13H0.500zM5 0.500v13M9 0.500v13M0.500 5h13M0.500 9h13" fill="none" stroke="#444" />
          </Ico>
        </ViewBtn>
        <ViewBtn>
          <Ico width="14" height="14" viewBox="0 0 14 14">
            <path d="M0.500 0.500h13v13H0.500zM3.500 3.500h7v7h-7zM5 6h4M5 8h4" fill="none" stroke="#444" />
          </Ico>
        </ViewBtn>
        <ViewBtn $ml={2}>
          <Ico width="14" height="14" viewBox="0 0 14 14">
            <path d="M0.500 0.500h13v13H0.500zM4 0.500v7h6v-7" fill="none" stroke="#444" />
          </Ico>
        </ViewBtn>
        <Ico $ml={7} width="7" height="2" viewBox="0 0 7 2">
          <path d="M0 1h7" stroke="#333" />
        </Ico>
        <ZoomLine>
          <ZoomTick $ml={51} $w={1} $h={7} $color="#888" />
          <ZoomTick $ml={8} $w={5} $h={12} $color="#555" />
        </ZoomLine>
      </StatusBar>

      <Taskbar>
        <TaskApps>
          {APPS.map((app, i) => (
            <TaskSlot key={i} $bg={app.bg} $running={app.running}>
              {app.icon}
            </TaskSlot>
          ))}
        </TaskApps>
        <Ico width="25" height="26" viewBox="0 0 25 26">
          <path d="M21 1c3 9 0 21-11 24C5 26 1 24 0 21c8 2 17-4 18-19z" fill="#f09a1f" />
          <circle cx="20" cy="3" r="2.500" fill="#c0392b" />
        </Ico>
        <Ico $ml={24} width="12" height="7" viewBox="0 0 12 7">
          <path d="M1 6l5-5 5 5" fill="none" stroke="#ddd" strokeWidth="1.200" />
        </Ico>
        <Ico $ml={11} width="14" height="20" viewBox="0 0 14 20">
          <ellipse cx="7" cy="6.500" rx="4.500" ry="6" fill="#000" stroke="#333" strokeWidth="0.500" />
          <ellipse cx="7" cy="13.500" rx="5.500" ry="5" fill="#f4f4f4" />
          <rect x="3" y="9" width="8" height="2.500" fill="#e02020" />
          <path d="M1.500 18.500h4.500M8 18.500h4.500" stroke="#f0a020" strokeWidth="2" />
          <circle cx="5" cy="4.500" r="1" fill="#fff" />
          <circle cx="9" cy="4.500" r="1" fill="#fff" />
        </Ico>
        <Ico $ml={12} width="12" height="20" viewBox="0 0 12 20">
          <path d="M2 5V2h8v3M2 15v3h8v-3" fill="none" stroke="#bbb" />
          <rect x="1" y="6" width="6" height="8" fill="none" stroke="#ddd" />
          <path d="M7 9l4-2v6l-4-2" fill="none" stroke="#ddd" />
        </Ico>
        <Ico $ml={10} width="13" height="22" viewBox="0 0 13 22">
          <rect x="3.500" y="0" width="6" height="14" rx="3" fill="#ddd" />
          <path d="M1 10c0 7 11 7 11 0M6.500 15v4M2 20h9" fill="none" stroke="#ddd" strokeWidth="1.500" />
        </Ico>
        <Ico $ml={11} width="14" height="18" viewBox="0 0 14 18">
          <path d="M7 0l7 2v8c0 4-4 7-7 8-3-1-7-4-7-8V2z" fill="#2f6fe0" />
          <path d="M7 2.500l5 1.500v6c0 3-3 5-5 5.500C5 15 2 13 2 10V4z" fill="#0e2a66" />
          <path d="M4 7l3 5 3-5" fill="none" stroke="#fff" strokeWidth="1.500" />
        </Ico>
        <Ico $ml={9} width="16" height="16" viewBox="0 0 16 16">
          <circle cx="6" cy="6" r="6" fill="#3fc44f" />
          <circle cx="11.500" cy="11" r="4.500" fill="#ccc" />
        </Ico>
        <Ico $ml={10} width="14" height="15" viewBox="0 0 14 15">
          <path d="M1 10c2 0 4 2 4 4M1 6c4 0 8 4 8 8M1 2c6 0 12 6 12 12" fill="none" stroke="#aaa" strokeWidth="1.400" />
          <circle cx="2" cy="13" r="1.500" fill="#fff" />
        </Ico>
        <Ico $ml={7} width="17" height="16" viewBox="0 0 17 16">
          <path d="M1 5h3l4-4v14l-4-4H1z" fill="none" stroke="#ddd" />
          <path d="M11 5c1 2 1 4 0 6M14 3c2 3 2 7 0 10" fill="none" stroke="#ddd" />
        </Ico>
        <Ico $ml={8} width="16" height="11" viewBox="0 0 16 11">
          <rect x="3.500" y="2.500" width="12" height="8" fill="none" stroke="#ddd" />
          <rect x="5" y="4" width="9" height="5" fill="#ddd" />
          <rect x="0" y="0" width="5" height="4" fill="#ddd" />
        </Ico>
        <Txt $ml={11} $size={15} $color="#ddd" style={{ fontFamily: svgFont }}>A</Txt>
        <Ico $ml={15} width="16" height="20" viewBox="0 0 16 20">
          <rect width="16" height="20" rx="2" fill="#1f7fe6" />
          <circle cx="8" cy="9.500" r="4.500" fill="none" stroke="#fff" strokeWidth="2" />
          <path d="M9 12l4 4" stroke="#fff" strokeWidth="2" />
        </Ico>
        <Ico $ml={16} width="20" height="24" viewBox="0 0 20 24">
          <path d="M10 1a11 11 0 0 1 0 22" fill="none" stroke="#57b76b" strokeWidth="1.500" />
          <text x="9" y="16" textAnchor="middle" fontFamily={UI_FONT} fontSize="13" fill="#eee">43</text>
        </Ico>
        <Clock>
          <ClockTime>19:2</ClockTime>
          <div>2022/1</div>
        </Clock>
      </Taskbar>
    </Page>
  );
}
